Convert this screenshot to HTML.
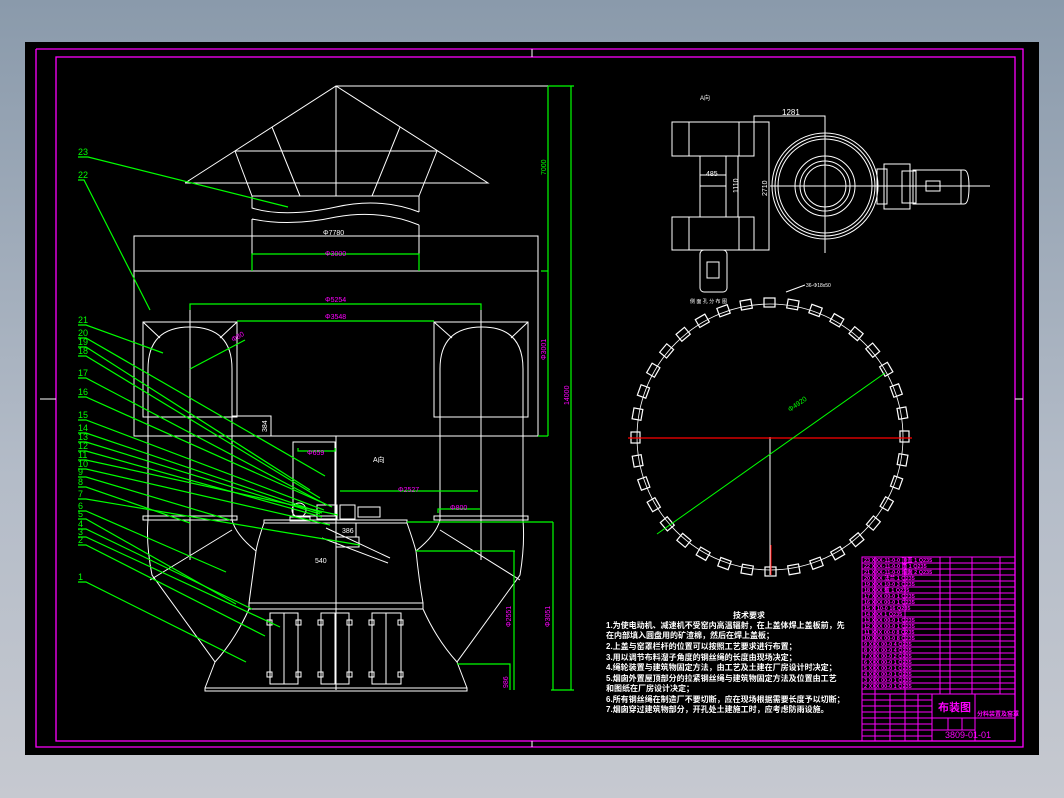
<!DOCTYPE html>
<html><head><meta charset="utf-8"><style>
html,body{margin:0;padding:0;width:1064px;height:798px;overflow:hidden;background:linear-gradient(#8a9aab,#b4bcc8 60%,#c6c9d0);}
svg{display:block}
text{font-family:"Liberation Sans","Noto Sans CJK SC",sans-serif}
</style></head><body>
<svg width="1064" height="798" viewBox="0 0 1064 798" xmlns="http://www.w3.org/2000/svg">
<rect x="25" y="42" width="1014" height="713" fill="#000"/>
<g fill="none" stroke="#f0f" stroke-width="1.3">
<polyline points="36,49 1023,49 1023,747 36,747 36,49"/>
<rect x="56" y="57" width="959" height="684"/>
</g>
<g stroke="#fff" stroke-width="1" fill="none">
<line x1="40" y1="399" x2="56" y2="399"/><line x1="1015" y1="399" x2="1023" y2="399"/>
<line x1="532" y1="49" x2="532" y2="57"/><line x1="532" y1="741" x2="532" y2="747"/>
<polyline points="185,183 336,86 488,183 185,183"/>
<line x1="336" y1="86" x2="548" y2="86"/>
<line x1="235" y1="151" x2="437" y2="151"/>
<line x1="336" y1="86" x2="336" y2="196"/>
<line x1="272" y1="127" x2="300" y2="196"/><line x1="400" y1="127" x2="372" y2="196"/>
<line x1="235" y1="151" x2="252" y2="196"/><line x1="437" y1="151" x2="419" y2="196"/>
<polyline points="252,196 419,196 419,212"/>
<path d="M252,196 V208 Q285,218 336,207 Q380,197 419,212"/>
<path d="M252,219 V271 M419,225 V271 M252,219 Q290,227 336,217 Q380,209 419,225"/>
<rect x="134" y="236" width="404" height="200"/>
<line x1="134" y1="271" x2="538" y2="271"/>
<rect x="143" y="322" width="94" height="95"/>
<rect x="434" y="322" width="94" height="95"/>
<line x1="143" y1="322" x2="160" y2="338"/><line x1="237" y1="322" x2="220" y2="338"/>
<line x1="434" y1="322" x2="452" y2="338"/><line x1="528" y1="322" x2="511" y2="338"/>
<path d="M148,520 V369 Q148,327 190,327 Q232,327 232,369 V520"/>
<path d="M440,520 V369 Q440,327 482,327 Q523,327 523,369 V520"/>
<line x1="190" y1="304" x2="190" y2="560"/><line x1="481" y1="304" x2="481" y2="560"/>
<rect x="232" y="416" width="39" height="20"/>
<line x1="232" y1="436" x2="440" y2="436"/>
<rect x="293" y="442" width="42" height="74"/>
<line x1="336" y1="436" x2="336" y2="690"/>
<rect x="143" y="516" width="94" height="4"/><rect x="434" y="516" width="94" height="4"/>
<rect x="264" y="520" width="143" height="3"/>
<circle cx="299" cy="510" r="7"/><rect x="290" y="517" width="20" height="4"/>
<rect x="317" y="505" width="20" height="14"/><rect x="340" y="505" width="15" height="14"/><rect x="358" y="507" width="22" height="10"/>
<line x1="326" y1="528" x2="390" y2="558"/><line x1="322" y1="538" x2="388" y2="563"/>
<rect x="336" y="523" width="20" height="14"/><rect x="336" y="537" width="23" height="10"/>
<path d="M264,523 Q258,540 256,551 Q252,580 249,603 M407,523 Q413,540 416,551 Q419,580 423,603"/>
<rect x="249" y="603" width="174" height="6"/>
<g>
<rect x="270" y="613" width="28" height="71"/><line x1="284" y1="613" x2="284" y2="684"/>
<rect x="321" y="613" width="28" height="71"/><line x1="335" y1="613" x2="335" y2="684"/>
<rect x="372" y="613" width="29" height="71"/><line x1="386" y1="613" x2="386" y2="684"/>
<rect x="267" y="620" width="5" height="5"/><rect x="296" y="620" width="5" height="5"/><rect x="318" y="620" width="5" height="5"/><rect x="347" y="620" width="5" height="5"/><rect x="369" y="620" width="5" height="5"/><rect x="398" y="620" width="5" height="5"/>
<rect x="267" y="672" width="5" height="5"/><rect x="296" y="672" width="5" height="5"/><rect x="318" y="672" width="5" height="5"/><rect x="347" y="672" width="5" height="5"/><rect x="369" y="672" width="5" height="5"/><rect x="398" y="672" width="5" height="5"/>
</g>
<path d="M148,520 Q146,545 152,575 L215,662 L205,688 M232,520 Q236,535 256,551 M232,530 L150,580"/>
<path d="M523,520 Q525,545 520,575 L457,662 L467,688 M440,520 Q436,535 416,551 M440,530 L520,580"/>
<path d="M249,609 Q235,640 215,662 M423,609 Q437,640 457,662"/>
<rect x="205" y="688" width="262" height="3"/>
<rect x="672" y="122" width="82" height="34"/><line x1="689" y1="122" x2="689" y2="156"/><line x1="739" y1="122" x2="739" y2="156"/>
<rect x="672" y="217" width="82" height="33"/><line x1="689" y1="217" x2="689" y2="250"/><line x1="739" y1="217" x2="739" y2="250"/>
<rect x="700" y="156" width="26" height="61"/><line x1="726" y1="156" x2="738" y2="156"/><line x1="738" y1="156" x2="738" y2="217"/>
<line x1="700" y1="175" x2="726" y2="175"/><line x1="700" y1="186" x2="726" y2="186"/>
<polyline points="754,122 769,122 769,250 754,250"/>
<polyline points="754,122 754,116 825,116 825,253"/>
<rect x="700" y="250" width="27" height="42" rx="4"/><rect x="707" y="262" width="12" height="16"/>
<circle cx="825" cy="186" r="53"/><circle cx="825" cy="186" r="50"/><circle cx="825" cy="186" r="47"/>
<circle cx="825" cy="186" r="30"/><circle cx="825" cy="186" r="25"/><circle cx="825" cy="186" r="21"/>
<line x1="770" y1="186" x2="990" y2="186"/>
<rect x="884" y="164" width="26" height="45"/><rect x="877" y="169" width="10" height="35"/>
<rect x="902" y="171" width="14" height="32"/><rect x="913" y="170" width="48" height="34"/>
<path d="M955,170 H964 Q969,170 969,187 Q969,204 964,204 H955"/>
<rect x="926" y="181" width="14" height="10"/>
<line x1="770" y1="437" x2="770" y2="575"/>
</g>
<circle cx="770" cy="437" r="133" fill="none" stroke="#fff" stroke-width="0.8"/>
<g fill="none" stroke="#fff" stroke-width="1.2">
<g id="sq"><rect x="764" y="298" width="11" height="9"/></g>
<use href="#sq" transform="rotate(10 770 437)"/><use href="#sq" transform="rotate(20 770 437)"/><use href="#sq" transform="rotate(30 770 437)"/><use href="#sq" transform="rotate(40 770 437)"/><use href="#sq" transform="rotate(50 770 437)"/><use href="#sq" transform="rotate(60 770 437)"/><use href="#sq" transform="rotate(70 770 437)"/><use href="#sq" transform="rotate(80 770 437)"/><use href="#sq" transform="rotate(90 770 437)"/><use href="#sq" transform="rotate(100 770 437)"/><use href="#sq" transform="rotate(110 770 437)"/><use href="#sq" transform="rotate(120 770 437)"/><use href="#sq" transform="rotate(130 770 437)"/><use href="#sq" transform="rotate(140 770 437)"/><use href="#sq" transform="rotate(150 770 437)"/><use href="#sq" transform="rotate(160 770 437)"/><use href="#sq" transform="rotate(170 770 437)"/><use href="#sq" transform="rotate(180 770 437)"/><use href="#sq" transform="rotate(190 770 437)"/><use href="#sq" transform="rotate(200 770 437)"/><use href="#sq" transform="rotate(210 770 437)"/><use href="#sq" transform="rotate(220 770 437)"/><use href="#sq" transform="rotate(230 770 437)"/><use href="#sq" transform="rotate(240 770 437)"/><use href="#sq" transform="rotate(250 770 437)"/><use href="#sq" transform="rotate(260 770 437)"/><use href="#sq" transform="rotate(270 770 437)"/><use href="#sq" transform="rotate(280 770 437)"/><use href="#sq" transform="rotate(290 770 437)"/><use href="#sq" transform="rotate(300 770 437)"/><use href="#sq" transform="rotate(310 770 437)"/><use href="#sq" transform="rotate(320 770 437)"/><use href="#sq" transform="rotate(330 770 437)"/><use href="#sq" transform="rotate(340 770 437)"/><use href="#sq" transform="rotate(350 770 437)"/>
</g>
<line x1="628" y1="438" x2="912" y2="438" stroke="#f00" stroke-width="1.2"/>
<line x1="771" y1="545" x2="771" y2="575" stroke="#f00" stroke-width="1"/>
<line x1="657" y1="534" x2="885" y2="373" stroke="#0f0" stroke-width="1"/>
<text x="790" y="412" fill="#0f0" font-size="7" transform="rotate(-35 790 412)">Φ4920</text>
<line x1="786" y1="292" x2="805" y2="285" stroke="#fff"/><text x="806" y="287" fill="#fff" font-size="5">36-Φ18x50</text>
<text x="690" y="303" fill="#fff" font-size="5">侧 面 孔 分 布 图</text>
<text x="700" y="100" fill="#fff" font-size="6">A向</text>
<text x="782" y="115" fill="#fff" font-size="8">1281</text>
<text x="706" y="176" fill="#fff" font-size="7">485</text>
<text x="738" y="193" fill="#fff" font-size="7" transform="rotate(-90 738 193)">1110</text>
<text x="767" y="196" fill="#fff" font-size="7" transform="rotate(-90 767 196)">2710</text>
<g stroke="#0f0" stroke-width="1.2" fill="none">
<line x1="548" y1="86" x2="548" y2="436"/><line x1="548" y1="271" x2="541" y2="271"/><line x1="548" y1="436" x2="538" y2="436"/>
<line x1="571" y1="86" x2="571" y2="690"/><line x1="548" y1="86" x2="574" y2="86"/><line x1="551" y1="690" x2="574" y2="690"/>
<polyline points="252,271 252,254 419,254 419,271"/>
<polyline points="190,310 190,304 481,304 481,310"/>
<line x1="237" y1="321" x2="434" y2="321"/>
<line x1="190" y1="369" x2="245" y2="340"/>
<polyline points="298,448 298,451 335,451 335,448"/>
<line x1="340" y1="491" x2="478" y2="491"/>
<polyline points="438,513 438,509 480,509"/>
<line x1="407" y1="522" x2="553" y2="522"/><line x1="553" y1="522" x2="553" y2="690"/>
<line x1="416" y1="551" x2="515" y2="551"/><line x1="514" y1="551" x2="514" y2="690"/>
<polyline points="457,664 510,664 510,690"/>
<polyline points="78,157 88,157 288,207"/>
<polyline points="78,180 84,180 150,310"/>
<polyline points="78,325 86,325 163,353"/>
<polyline points="78,338 86,338 325,476"/>
<polyline points="78,347 86,347 310,490"/>
<polyline points="78,356 86,356 320,498"/>
<polyline points="78,378 86,378 327,505"/>
<polyline points="78,397 86,397 332,507"/>
<polyline points="78,420 86,420 324,510"/>
<polyline points="78,433 86,433 322,513"/>
<polyline points="78,442 86,442 320,514"/>
<polyline points="78,451 86,451 322,517"/>
<polyline points="78,460 86,460 338,515"/>
<polyline points="78,469 86,469 330,525"/>
<polyline points="78,477 86,477 230,520"/>
<polyline points="78,487 86,487 190,523"/>
<polyline points="78,499 86,499 360,545"/>
<polyline points="78,511 86,511 226,572"/>
<polyline points="78,519 86,519 236,604"/>
<polyline points="78,529 86,529 252,609"/>
<polyline points="78,537 86,537 280,627"/>
<polyline points="78,545 86,545 265,636"/>
<polyline points="78,582 86,582 246,662"/>
</g>
<g fill="#0f0" font-size="9">
<text x="78" y="155">23</text><text x="78" y="178">22</text><text x="78" y="323">21</text><text x="78" y="336">20</text><text x="78" y="345">19</text><text x="78" y="354">18</text><text x="78" y="376">17</text><text x="78" y="395">16</text><text x="78" y="418">15</text><text x="78" y="431">14</text><text x="78" y="440">13</text><text x="78" y="449">12</text><text x="78" y="458">11</text><text x="78" y="467">10</text><text x="78" y="475">9</text><text x="78" y="485">8</text><text x="78" y="497">7</text><text x="78" y="509">6</text><text x="78" y="517">5</text><text x="78" y="527">4</text><text x="78" y="535">3</text><text x="78" y="543">2</text><text x="78" y="580">1</text>
</g>
<g fill="#fff" font-size="7">
<text x="323" y="235">Φ7780</text><text x="342" y="533">386</text><text x="315" y="563">540</text>
<text x="373" y="462">A向</text><text x="267" y="432" transform="rotate(-90 267 432)">384</text>
</g>
<g fill="#f0f" font-size="7">
<text x="325" y="256">Φ3000</text><text x="325" y="302">Φ5254</text><text x="325" y="319">Φ3548</text>
<text x="307" y="455">Φ659</text><text x="398" y="492">Φ2527</text><text x="450" y="510">Φ800</text>
<text x="233" y="342" transform="rotate(-30 233 342)">Φ80</text>
<text x="546" y="175" transform="rotate(-90 546 175)" fill="#0f0">7000</text>
<text x="546" y="360" transform="rotate(-90 546 360)">Φ3001</text>
<text x="569" y="405" transform="rotate(-90 569 405)">14000</text>
<text x="550" y="627" transform="rotate(-90 550 627)">Φ3051</text>
<text x="511" y="627" transform="rotate(-90 511 627)">Φ2551</text>
<text x="508" y="688" transform="rotate(-90 508 688)">986</text>
</g>
<g fill="#fff" font-size="8" font-weight="bold">
<text x="733" y="618">技术要求</text>
<text x="606" y="628">1.为使电动机、减速机不受窑内高温辐射，在上盖体焊上盖板前，先</text>
<text x="606" y="638">在内部填入圆盘用的矿渣棉，然后在焊上盖板；</text>
<text x="606" y="649">2.上盖与窑罩栏杆的位置可以按照工艺要求进行布置；</text>
<text x="606" y="660">3.用以调节布料溜子角度的钢丝绳的长度由现场决定；</text>
<text x="606" y="670">4.绳轮装置与建筑物固定方法，由工艺及土建在厂房设计时决定；</text>
<text x="606" y="681">5.烟囱外置屋顶部分的拉紧钢丝绳与建筑物固定方法及位置由工艺</text>
<text x="606" y="691">和图纸在厂房设计决定；</text>
<text x="606" y="702">6.所有钢丝绳在制造厂不要切断，应在现场根据需要长度予以切断；</text>
<text x="606" y="712">7.烟囱穿过建筑物部分，开孔处土建施工时，应考虑防雨设施。</text>
</g>
<g stroke="#f0f" stroke-width="1" fill="none">
<rect x="862" y="557" width="153" height="184"/>
<path d="M862,563H1015M862,569H1015M862,575H1015M862,581H1015M862,587H1015M862,593H1015M862,599H1015M862,605H1015M862,611H1015M862,617H1015M862,623H1015M862,629H1015M862,635H1015M862,641H1015M862,647H1015M862,653H1015M862,659H1015M862,665H1015M862,671H1015M862,677H1015M862,683H1015M862,689H1015M862,694H1015"/>
<path d="M875,557V694M905,557V694M940,557V694M950,557V694M972,557V694M1000,557V694"/>
<path d="M862,700H932M862,706H932M862,712H932M862,718H932M862,724H932M862,730H932M862,736H932M932,694V741M975,694V741M932,718H1015M932,730H975M875,694V741M890,694V741M905,694V741M918,694V741M948,718V730M962,718V730"/>
</g>
<g fill="#f0f" font-size="5.5" font-weight="bold">
<text x="864" y="562">23 XXX-11-0-0 顶盖 1 Q235</text><text x="864" y="568">22 XXX-11-0-0 筒 1 Q235</text><text x="864" y="574">21 XXX-11-0-0 烟囱 2 Q235</text><text x="864" y="580">20 XXX 法兰 1 Q235</text><text x="864" y="586">19 XXX 10-0 3 Q235</text><text x="864" y="592">18 XXX 板 1 Q235</text><text x="864" y="598">17 XXX 00-0 1 Q235</text><text x="864" y="604">16 XXX 00-0 1 Q235</text><text x="864" y="610">15 X 10-0 16 Q235</text><text x="864" y="616">14 XXX 1 Q235</text><text x="864" y="622">13 XXX 00-0 1 Q235</text><text x="864" y="628">12 XXX 00-0 1 Q235</text><text x="864" y="634">11 XXX 00-0 8 Q235</text><text x="864" y="640">10 XXX 00-0 8 Q235</text><text x="864" y="646">9 XXX 00-0 4 Q235</text><text x="864" y="652">8 XXX 00-0 4 Q235</text><text x="864" y="658">7 XXX 00-0 2 Q235</text><text x="864" y="664">6 XXX 00-0 1 Q235</text><text x="864" y="670">5 XXX 00-0 1 Q235</text><text x="864" y="676">4 XXX 00-0 1 Q235</text><text x="864" y="682">3 XXX 00-0 1 Q235</text><text x="864" y="688">2 XXX 00-0 1 Q235</text>
</g>
<text x="938" y="711" fill="#f0f" font-size="11" font-weight="bold">布装图</text>
<text x="977" y="716" fill="#f0f" font-size="6" font-weight="bold">分料装置及窑罩</text>
<text x="945" y="738" fill="#f0f" font-size="9">3809-01-01</text>
</svg>
</body></html>
